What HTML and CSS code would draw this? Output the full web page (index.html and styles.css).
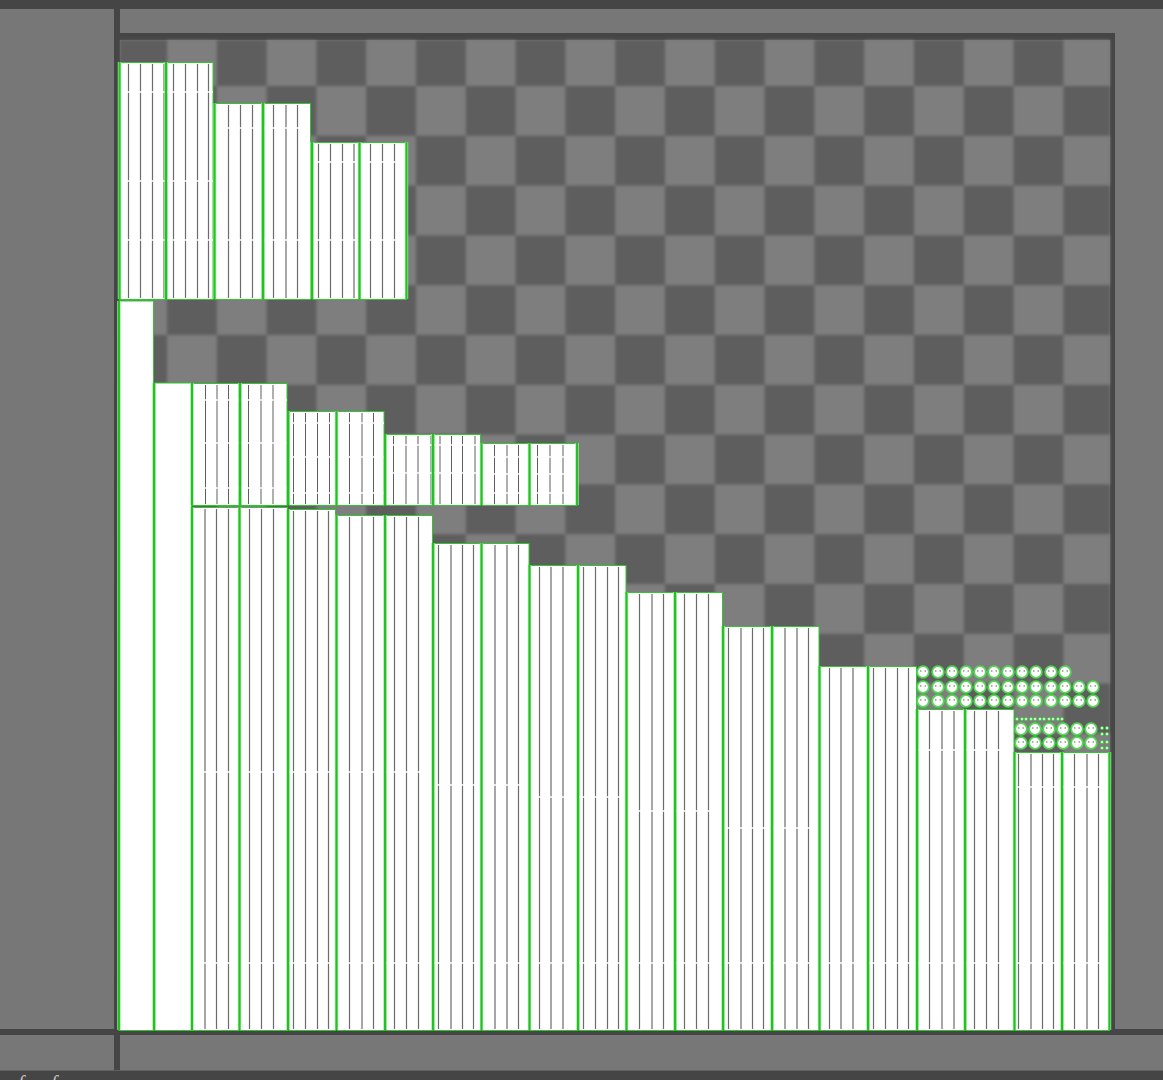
FILE: index.html
```html
<!DOCTYPE html>
<html lang="en">
<head>
<meta charset="utf-8">
<title>Texture atlas</title>
<link rel="stylesheet" href="styles.css">
</head>
<body>
<div class="bar bar-top"></div>
<main class="workspace">
  <div class="rail rail-left"></div>
  <div class="rail rail-top"></div>
  <div class="rail rail-right"></div>
  <div class="rail rail-bottom"></div>
  <div class="canvas">
    <svg class="atlas" viewBox="120 40 990 989" width="990" height="989" aria-label="Sprite atlas">
      <defs>
        <pattern id="checker" patternUnits="userSpaceOnUse" x="117.2" y="36.2" width="99.6" height="99.6">
          <rect width="99.6" height="99.6" fill="#7e7e7e"/>
          <rect x="0" y="0" width="49.8" height="49.8" fill="#5e5e5e"/>
          <rect x="49.8" y="49.8" width="49.8" height="49.8" fill="#5e5e5e"/>
        </pattern>
        <path id="edges" d="M119.5 62V299M166 62V299M214.5 103V299M263 103V299M312 142V299M359.5 142V299M406.5 142V299
          M192 383V505M240 383V505M288 411V505M336.5 411V505M385 434V505M433 434V505M481.5 443V505M529.5 443V505M577 443V505
          M192 507V1030M239.5 507V1030M288 509V1030M336.5 515V1030M385 515V1030M433 543V1030M481.5 543V1030M529.5 565V1030M578 565V1030M626.5 592V1030M675 592V1030M723 626V1030M772 626V1030M819.5 666V1030M868 666V1030M917 709V1030M965 709V1030M1014.5 752V1030M1062 752V1030M1109.5 752V1030
          M119 301V1030M154 383V1030"/>
        <g id="face">
          <circle r="5.8" class="face-body"/>
          <circle r="0.8" cx="-2.2" cy="-1" class="face-eye"/>
          <circle r="0.8" cx="2.2" cy="-1" class="face-eye"/>
        </g>
        <circle id="dot" r="1.5" class="face-dot"/>
      </defs>

      <rect class="checker" x="120" y="40" width="990" height="989"/>

      <g class="sprites">
        <!-- top strip -->
        <rect class="frame" x="119.5" y="62.5" width="45.5" height="237"/>
        <rect class="frame" x="167" y="62.5" width="46" height="237"/>
        <rect class="frame" x="215" y="103.5" width="47" height="196"/>
        <rect class="frame" x="264" y="103.5" width="46.5" height="196"/>
        <rect class="frame" x="313" y="142.5" width="45.5" height="157"/>
        <rect class="frame" x="360.5" y="142.5" width="46" height="157"/>

        <!-- solid columns -->
        <rect class="frame" x="119" y="301" width="34.5" height="729.5"/>
        <rect class="frame" x="155" y="383" width="36.5" height="647.5"/>

        <!-- middle strip -->
        <rect class="frame" x="192" y="383.5" width="47" height="122"/>
        <rect class="frame" x="241" y="383.5" width="46" height="122"/>
        <rect class="frame" x="289.5" y="411.5" width="46" height="94"/>
        <rect class="frame" x="337.5" y="411.5" width="46.5" height="94"/>
        <rect class="frame" x="386" y="434.5" width="46" height="71"/>
        <rect class="frame" x="434" y="434.5" width="46.5" height="71"/>
        <rect class="frame" x="482.5" y="443.5" width="46" height="62"/>
        <rect class="frame" x="530.5" y="443.5" width="46.5" height="62"/>

        <!-- bottom strip -->
        <rect class="frame" x="192" y="507.5" width="47" height="523"/>
        <rect class="frame" x="240.5" y="507.5" width="47" height="523"/>
        <rect class="frame" x="289" y="509.5" width="46.5" height="521"/>
        <rect class="frame" x="337.5" y="515.5" width="47" height="515"/>
        <rect class="frame" x="386" y="515.5" width="46.5" height="515"/>
        <rect class="frame" x="434" y="543.5" width="47" height="487"/>
        <rect class="frame" x="482.5" y="543.5" width="46.5" height="487"/>
        <rect class="frame" x="530.5" y="565.5" width="47" height="465"/>
        <rect class="frame" x="579" y="565.5" width="47" height="465"/>
        <rect class="frame" x="627.5" y="592.5" width="47" height="438"/>
        <rect class="frame" x="676" y="592.5" width="46.5" height="438"/>
        <rect class="frame" x="724" y="626.5" width="47.5" height="404"/>
        <rect class="frame" x="773" y="626.5" width="46" height="404"/>
        <rect class="frame" x="820.5" y="666.5" width="47" height="364"/>
        <rect class="frame" x="869" y="666.5" width="47.5" height="364"/>
        <rect class="frame" x="918" y="709.5" width="46.5" height="321"/>
        <rect class="frame" x="966" y="709.5" width="48" height="321"/>
        <rect class="frame" x="1015.5" y="752.5" width="46" height="278"/>
        <rect class="frame" x="1063" y="752.5" width="46.5" height="278"/>

        <!-- grid lines inside the frames -->
        <path class="grid" d="M128.5 64V298M140.5 64V298M152.5 64V298M164 64V298
          M173.5 64V298M185.5 64V298M197.5 64V298M208.5 64V298
          M228.5 105V298M240.5 105V298M252.5 105V298
          M273.5 105V298M286 105V298M297.5 105V298
          M318.5 144V298M330.5 144V298M342.5 144V298M354 144V298
          M370.5 144V298M382.5 144V298M394.5 144V298"/>
        <path class="grid grid-fine" d="M205.5 385V504M217 385V504M228.5 385V504
          M248.5 385V504M261 385V504M273 385V504
          M293.5 413V504M305.5 413V504M317.5 413V504M329.5 413V504
          M349.5 413V504M362 413V504M373.5 413V504
          M393.5 436V504M406 436V504M418 436V504M431 436V504
          M440 436V504M451.5 436V504M462.5 436V504M475 436V504
          M494.5 445V504M507 445V504M518.5 445V504
          M537.5 445V504M550 445V504M563 445V504"/>
        <path class="grid" d="M205 509V1029M216.5 509V1029M228.5 509V1029
          M249.5 509V1029M261.5 509V1029M273.5 509V1029
          M293.5 511V1029M305.5 511V1029M317.5 511V1029M328.5 511V1029
          M349.5 517V1029M362 517V1029M373.5 517V1029
          M394.5 517V1029M406.5 517V1029M418.5 517V1029
          M438.5 545V1029M451 545V1029M462.5 545V1029M473.5 545V1029
          M495 545V1029M507 545V1029M518.5 545V1029
          M539.5 567V1029M551 567V1029M563 567V1029
          M583.5 567V1029M595.5 567V1029M607.5 567V1029M618.5 567V1029
          M639.5 594V1029M652 594V1029M663.5 594V1029
          M684.5 594V1029M696.5 594V1029M708.5 594V1029
          M728.5 628V1029M741 628V1029M752.5 628V1029M763.5 628V1029
          M785 628V1029M797 628V1029M808.5 628V1029
          M829.5 668V1029M841 668V1029M853 668V1029
          M873.5 668V1029M885.5 668V1029M897.5 668V1029M908.5 668V1029
          M929.5 711V1029M942 711V1029M954 711V1029
          M974.5 711V1029M986.5 711V1029M998.5 711V1029
          M1018.5 754V1029M1031 754V1029M1042.5 754V1029M1053.5 754V1029
          M1074.5 754V1029M1087 754V1029M1098.5 754V1029"/>

        <!-- breaks in the grid lines -->
        <path class="gap" d="M121 92H213M216 128H310M314 162H406M121 181H213M121 240H213M216 240H310M314 240H406"/>
        <path class="gap" d="M193 400H287M193 443H287M193 488H287M290 423H384M290 457H384M290 493H384M387 445H480M387 473H480M483 457H577M483 474H577M483 493H577"/>
        <path class="gap" d="M193 772H433M435 785H529M531 797H626M628 811H722M725 828H819M918 750H1012M1015 787H1109M193 963H1109"/>

        <!-- frame edges: a soft halo under a bright core -->
        <use href="#edges" class="edge-halo"/>
        <use href="#edges" class="edge-core"/>

        <!-- small sprites -->
        <g class="faces">
          <use href="#face" x="923" y="672"/><use href="#face" x="938" y="672"/><use href="#face" x="952" y="672"/><use href="#face" x="966" y="672"/><use href="#face" x="980" y="672"/><use href="#face" x="994" y="672"/><use href="#face" x="1008" y="672"/><use href="#face" x="1022" y="672"/><use href="#face" x="1036" y="672"/><use href="#face" x="1051" y="672"/><use href="#face" x="1065" y="672"/>
          <use href="#face" x="923" y="687"/><use href="#face" x="938" y="687"/><use href="#face" x="952" y="687"/><use href="#face" x="966" y="687"/><use href="#face" x="980" y="687"/><use href="#face" x="994" y="687"/><use href="#face" x="1008" y="687"/><use href="#face" x="1022" y="687"/><use href="#face" x="1036" y="687"/><use href="#face" x="1051" y="687"/><use href="#face" x="1065" y="687"/><use href="#face" x="1079" y="687"/><use href="#face" x="1093" y="687"/>
          <use href="#face" x="923" y="701"/><use href="#face" x="938" y="701"/><use href="#face" x="952" y="701"/><use href="#face" x="966" y="701"/><use href="#face" x="980" y="701"/><use href="#face" x="994" y="701"/><use href="#face" x="1008" y="701"/><use href="#face" x="1022" y="701"/><use href="#face" x="1036" y="701"/><use href="#face" x="1051" y="701"/><use href="#face" x="1065" y="701"/><use href="#face" x="1079" y="701"/><use href="#face" x="1093" y="701"/>
          <use href="#face" x="1021" y="729"/><use href="#face" x="1035" y="729"/><use href="#face" x="1049" y="729"/><use href="#face" x="1063" y="729"/><use href="#face" x="1077" y="729"/><use href="#face" x="1091" y="729"/>
          <use href="#face" x="1021" y="743"/><use href="#face" x="1035" y="743"/><use href="#face" x="1049" y="743"/><use href="#face" x="1063" y="743"/><use href="#face" x="1077" y="743"/><use href="#face" x="1091" y="743"/>
          <use href="#dot" x="1017" y="719"/><use href="#dot" x="1022" y="719"/><use href="#dot" x="1026" y="719"/><use href="#dot" x="1031" y="719"/><use href="#dot" x="1035" y="719"/><use href="#dot" x="1040" y="719"/><use href="#dot" x="1044" y="719"/><use href="#dot" x="1049" y="719"/><use href="#dot" x="1053" y="719"/><use href="#dot" x="1058" y="719"/><use href="#dot" x="1062" y="719"/>
          <use href="#dot" x="1102" y="728"/><use href="#dot" x="1107" y="728"/><use href="#dot" x="1102" y="734"/><use href="#dot" x="1107" y="734"/><use href="#dot" x="1102" y="742"/><use href="#dot" x="1107" y="742"/><use href="#dot" x="1102" y="748"/><use href="#dot" x="1107" y="748"/>
        </g>
      </g>
    </svg>
  </div>
</main>
<div class="bar bar-bottom"><span class="stroke">f</span><span class="stroke">f</span></div>
</body>
</html>
```

FILE: styles.css
```css
html, body {
  margin: 0;
  padding: 0;
}

body {
  display: flex;
  flex-direction: column;
  width: 1163px;
  height: 1080px;
  overflow: hidden;
  background: #777;
  font-family: "Liberation Serif", serif;
}

.bar {
  flex: none;
  background: #454545;
}

.bar-top {
  height: 9px;
}

.bar-bottom {
  height: 9px;
  margin-top: auto;
  border-top: 1px solid #606060;
  display: flex;
  gap: 19px;
  padding-left: 18px;
  overflow: hidden;
}

.stroke {
  color: #c4c4c4;
  font-style: italic;
  font-size: 20px;
  line-height: 24px;
  width: 14px;
}

.workspace {
  flex: none;
  display: grid;
  grid-template-columns: 114px 6px 990px 5px 48px;
  grid-template-rows: 24px 7px 989px 6px 35px;
  height: 1061px;
}

.rail {
  background: #454545;
}

.rail-left {
  grid-column: 2;
  grid-row: 1 / -1;
}

.rail-top {
  grid-column: 3 / 5;
  grid-row: 2;
}

.rail-right {
  grid-column: 4;
  grid-row: 2 / 4;
}

.rail-bottom {
  grid-column: 1 / -1;
  grid-row: 4;
}

.canvas {
  grid-column: 3;
  grid-row: 3;
  position: relative;
  z-index: 1;
}

.atlas {
  display: block;
  overflow: visible;
}

.checker {
  fill: url(#checker);
  filter: blur(1.5px);
}

.sprites {
  filter: blur(0.3px);
}

.frame {
  fill: #fff;
  stroke: #2ec72e;
  stroke-width: 1;
}

.grid {
  fill: none;
  stroke: #6c6c6c;
  stroke-width: 1.2;
}

.grid-fine {
  stroke: #4c4c4c;
  stroke-width: 0.9;
}

.gap {
  fill: none;
  stroke: #fff;
  stroke-width: 1.3;
}

.edge-halo {
  fill: none;
  stroke: #9cec9c;
  stroke-width: 3.4;
}

.edge-core {
  fill: none;
  stroke: #22c222;
  stroke-width: 2;
}

.face-body {
  fill: #fff;
  stroke: #52d952;
  stroke-width: 1.8;
}

.face-eye {
  fill: #777;
}

.face-dot {
  fill: #fff;
  stroke: #35cf35;
  stroke-width: 0.9;
}
```
